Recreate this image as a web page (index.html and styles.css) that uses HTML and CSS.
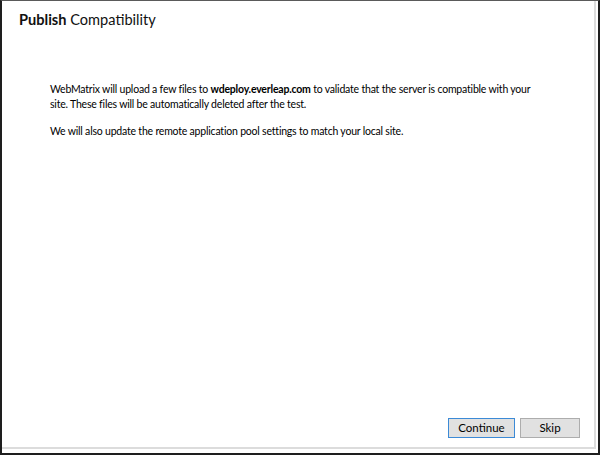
FILE: index.html
```html
<!DOCTYPE html>
<html>
<head>
<meta charset="utf-8">
<link rel="stylesheet" href="styles.css">
</head>
<body>
<div class="window">
  <div class="inner">
    <h1 class="title"><b>Publish</b> Compatibility</h1>
    <div class="content">
      <p>WebMatrix will upload a few files to <b>wdeploy.everleap.com</b> to validate that the server is compatible with your<br>site. These files will be automatically deleted after the test.</p>
      <p>We will also update the remote application pool settings to match your local site.</p>
    </div>
    <div class="buttons">
      <button class="btn btn-default">Continue</button>
      <button class="btn">Skip</button>
    </div>
  </div>
</div>
</body>
</html>
```
FILE: styles.css
```css
html, body {
  margin: 0;
  padding: 0;
  background: #fff;
}
.window {
  width: 600px;
  height: 455px;
  box-sizing: border-box;
  border-style: solid;
  border-color: #1e1e1e;
  border-width: 1px 2px 2px 2px;
  border-top-color: #5a5a5a;
  background: #fff;
  font-family: Lato, "Noto Sans", sans-serif;
  color: #000;
}
.inner {
  box-sizing: border-box;
  border-right: 2px solid #dcdcdc;
  border-bottom: 2px solid #dcdcdc;
  margin-right: 2px;
  height: calc(100% - 4px);
  display: flex;
  flex-direction: column;
}
.title {
  margin: 0;
  padding: 7px 0 0 17px;
  font-size: 14.6px;
  font-weight: normal;
  line-height: 24px;
  color: #111;
}
.title b { font-weight: 700; }
.content {
  padding: 50px 0 0 48px;
  font-size: 10.5px;
  letter-spacing: -0.2px;
  line-height: 15px;
  flex: 1;
}
.content p {
  margin: 0 0 12px 0;
  white-space: nowrap;
}
.content b { font-weight: 700; }
.buttons {
  display: flex;
  justify-content: flex-end;
  gap: 5px;
  padding: 0 14px 9px 0;
}
.btn {
  height: 20px;
  width: 60px;
  box-sizing: border-box;
  background: #e1e1e1;
  border: 1px solid #adadad;
  font-family: Lato, "Noto Sans", sans-serif;
  font-size: 11.5px;
  color: #000;
  padding: 0;
  line-height: 16px;
}
.btn-default {
  width: 67px;
  border-color: #3c8ad6;
}
```
